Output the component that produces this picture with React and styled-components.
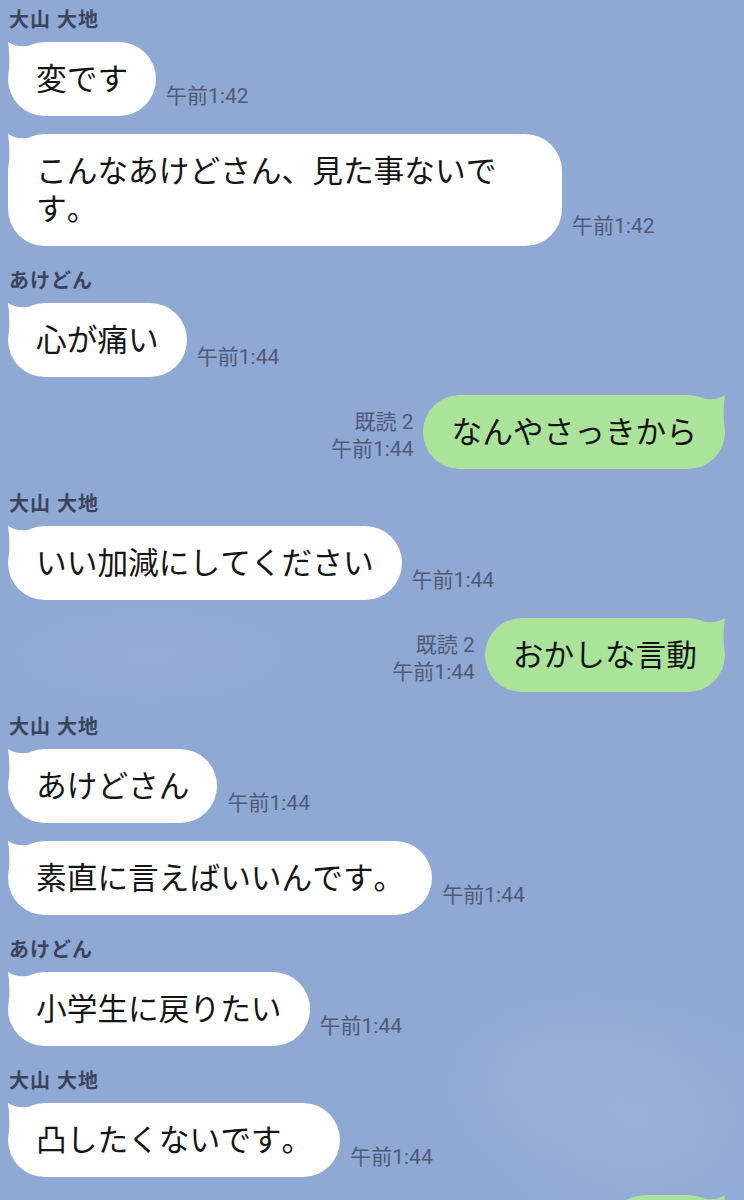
import React from 'react';
import styled, { createGlobalStyle } from 'styled-components';

const GlobalStyle = createGlobalStyle`
  html, body {
    margin: 0;
    padding: 0;
  }
  body {
    background: #8fa8d4;
    overflow: hidden;
  }
`;

const Screen = styled.div`
  height: 1200px;
  overflow: hidden;
  box-sizing: border-box;
  padding-top: 8px;
  display: flex;
  flex-direction: column;
  font-family: 'Roboto', 'Noto Sans CJK JP', sans-serif;
  font-kerning: none;
  background:
    radial-gradient(ellipse 260px 200px at 640px 1120px, rgba(168, 184, 226, 0.4), rgba(168, 184, 226, 0) 80%),
    radial-gradient(ellipse 200px 130px at 540px 1070px, rgba(162, 180, 223, 0.3), rgba(162, 180, 223, 0) 80%),
    radial-gradient(ellipse 320px 110px at 150px 655px, rgba(160, 178, 222, 0.4), rgba(160, 178, 222, 0) 75%),
    #8fa8d4;
`;

const Name = styled.div`
  margin: ${(p) => (p.$first ? '0' : '23px')} 0 10px 9px;
  font-size: 20px;
  font-weight: 700;
  line-height: 24px;
  letter-spacing: 1px;
  color: #3a445a;
`;

const Row = styled.div`
  display: flex;
  align-items: flex-end;
  gap: 10px;
  justify-content: ${(p) => (p.$mine ? 'flex-end' : 'flex-start')};
  padding: ${(p) => (p.$mine ? '0 19px 0 0' : '0 0 0 8px')};
  margin-top: ${(p) => (p.$afterName ? 0 : 18)}px;
`;

const Bubble = styled.div`
  position: relative;
  max-width: 554px;
  box-sizing: border-box;
  padding: 16px 28px 20px;
  border-radius: 37px;
  background: ${(p) => (p.$mine ? '#abe39b' : '#ffffff')};
  color: ${(p) => (p.$mine ? '#abe39b' : '#ffffff')};
  font-family: 'Noto Sans CJK JP', sans-serif;
  font-size: 30.7px;
  line-height: 38px;
  font-kerning: none;
  font-feature-settings: 'kern' 0, 'palt' 0;
`;

const BubbleText = styled.span`
  position: relative;
  color: #151515;
`;

const Tail = styled.svg`
  position: absolute;
  top: 0;
  width: 32px;
  height: 32px;
  ${(p) => (p.$mine ? 'right: 0; transform: scaleX(-1);' : 'left: 0;')}
`;

const Meta = styled.div`
  display: flex;
  flex-direction: column;
  align-items: ${(p) => (p.$mine ? 'flex-end' : 'flex-start')};
  margin-bottom: 6px;
  font-size: 21px;
  line-height: 27px;
  color: #4f5b76;
  white-space: nowrap;
`;

const BubbleTail = ({ mine }) => (
  <Tail $mine={mine} viewBox="0 0 32 32">
    <path d="M0 0 Q12 8 32 1 L32 32 L1 32 Q2 12 0 0 Z" fill="currentColor" />
  </Tail>
);

const chat = [
  { name: '大山 大地' },
  { text: '変です', time: '午前1:42' },
  { text: 'こんなあけどさん、見た事ないです。', time: '午前1:42' },
  { name: 'あけどん' },
  { text: '心が痛い', time: '午前1:44' },
  { text: 'なんやさっきから', time: '午前1:44', mine: true, read: '既読 2' },
  { name: '大山 大地' },
  { text: 'いい加減にしてください', time: '午前1:44' },
  { text: 'おかしな言動', time: '午前1:44', mine: true, read: '既読 2' },
  { name: '大山 大地' },
  { text: 'あけどさん', time: '午前1:44' },
  { text: '素直に言えばいいんです。', time: '午前1:44' },
  { name: 'あけどん' },
  { text: '小学生に戻りたい', time: '午前1:44' },
  { name: '大山 大地' },
  { text: '凸したくないです。', time: '午前1:44' },
  { text: 'はい', time: '午前1:44', mine: true, read: '既読 2' },
];

const App = () => {
  return (
    <>
      <GlobalStyle />
      <Screen>
        {chat.map((item, i) => {
          if (item.name) {
            return (
              <Name key={i} $first={i === 0}>
                {item.name}
              </Name>
            );
          }
          const afterName = i > 0 && !!chat[i - 1].name;
          const meta = (
            <Meta $mine={item.mine}>
              {item.read && <span>{item.read}</span>}
              <span>{item.time}</span>
            </Meta>
          );
          return (
            <Row key={i} $mine={item.mine} $afterName={afterName}>
              {item.mine && meta}
              <Bubble $mine={item.mine}>
                <BubbleTail mine={item.mine} />
                <BubbleText>{item.text}</BubbleText>
              </Bubble>
              {!item.mine && meta}
            </Row>
          );
        })}
      </Screen>
    </>
  );
};

export default App;
